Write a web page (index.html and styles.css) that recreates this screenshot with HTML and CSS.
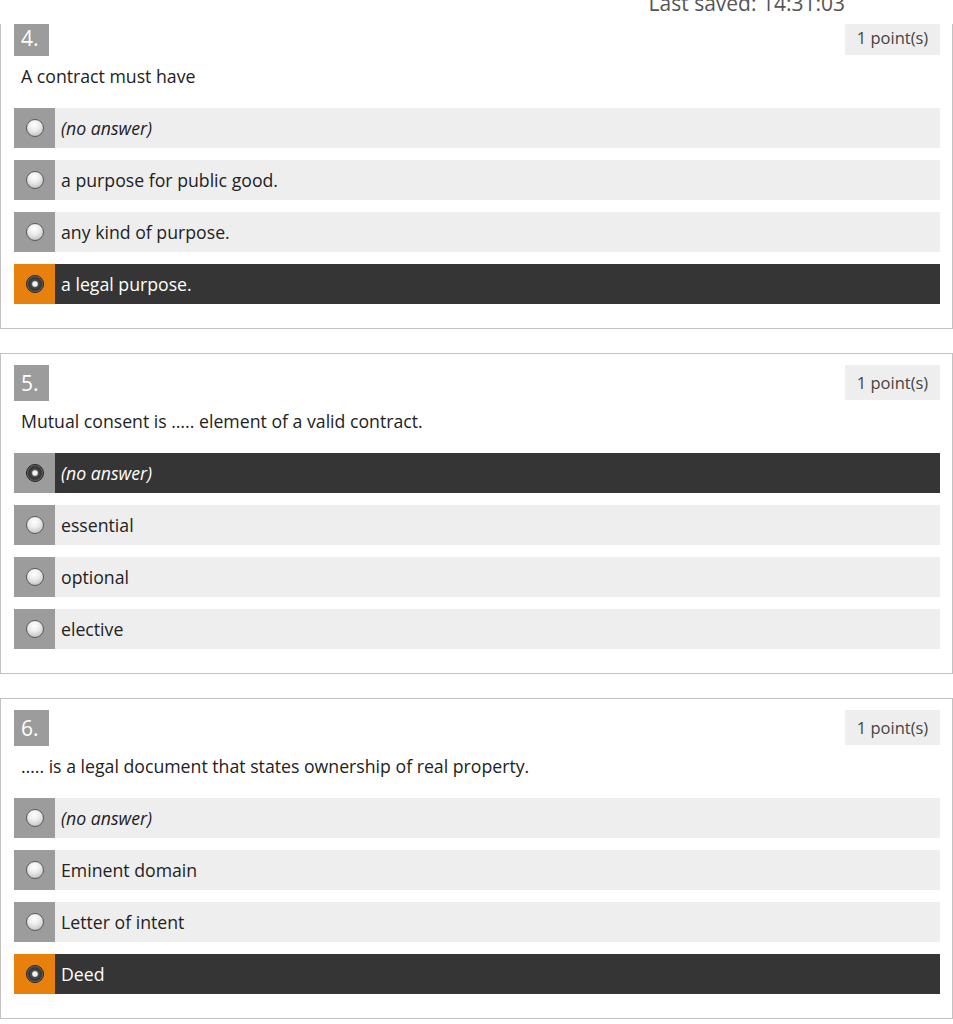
FILE: index.html
```html
<!DOCTYPE html>
<html>
<head>
<meta charset="utf-8">
<link rel="stylesheet" href="styles.css">
</head>
<body>
<div class="topbar"><span class="saved">Last saved: 14:31:03</span></div>
<main class="quiz">
  <section class="card">
    <div class="card-head"><span class="num">4.</span><span class="points">1 point(s)</span></div>
    <p class="question">A contract must have</p>
    <ul class="options">
      <li class="opt"><span class="radio"><i class="dot"></i></span><span class="label"><em>(no answer)</em></span></li>
      <li class="opt"><span class="radio"><i class="dot"></i></span><span class="label">a purpose for public good.</span></li>
      <li class="opt"><span class="radio"><i class="dot"></i></span><span class="label">any kind of purpose.</span></li>
      <li class="opt selected answered"><span class="radio"><i class="dot"></i></span><span class="label">a legal purpose.</span></li>
    </ul>
  </section>
  <section class="card">
    <div class="card-head"><span class="num">5.</span><span class="points">1 point(s)</span></div>
    <p class="question">Mutual consent is ….. element of a valid contract.</p>
    <ul class="options">
      <li class="opt selected"><span class="radio"><i class="dot"></i></span><span class="label"><em>(no answer)</em></span></li>
      <li class="opt"><span class="radio"><i class="dot"></i></span><span class="label">essential</span></li>
      <li class="opt"><span class="radio"><i class="dot"></i></span><span class="label">optional</span></li>
      <li class="opt"><span class="radio"><i class="dot"></i></span><span class="label">elective</span></li>
    </ul>
  </section>
  <section class="card">
    <div class="card-head"><span class="num">6.</span><span class="points">1 point(s)</span></div>
    <p class="question">….. is a legal document that states ownership of real property.</p>
    <ul class="options">
      <li class="opt"><span class="radio"><i class="dot"></i></span><span class="label"><em>(no answer)</em></span></li>
      <li class="opt"><span class="radio"><i class="dot"></i></span><span class="label">Eminent domain</span></li>
      <li class="opt"><span class="radio"><i class="dot"></i></span><span class="label">Letter of intent</span></li>
      <li class="opt selected answered"><span class="radio"><i class="dot"></i></span><span class="label">Deed</span></li>
    </ul>
  </section>
</main>
</body>
</html>
```
FILE: styles.css
```css
html, body {
  margin: 0;
  padding: 0;
  background: #fff;
  font-family: "Open Sans", "Noto Sans", sans-serif;
  color: #222;
}

.topbar {
  position: fixed;
  top: 0;
  left: 0;
  right: 0;
  height: 24px;
  background: #fff;
  overflow: hidden;
  display: flex;
  justify-content: flex-end;
  padding-right: 108px;
  z-index: 2;
}

.saved {
  font-size: 21px;
  line-height: 20px;
  color: #555;
  margin-top: -7px;
  white-space: nowrap;
}

.quiz {
  padding-top: 8px;
  display: flex;
  flex-direction: column;
  gap: 24px;
}

.card {
  border: 1px solid #c2c2c2;
  padding: 11px 12px 24px 13px;
  width: 953px;
  box-sizing: border-box;
}

.card-head {
  display: flex;
  justify-content: space-between;
  align-items: flex-start;
  height: 36px;
}

.num {
  background: #9c9c9c;
  color: #fff;
  font-size: 21px;
  width: 35px;
  height: 36px;
  line-height: 36px;
  box-sizing: border-box;
  padding-left: 7px;
}

.points {
  background: #eeeeee;
  color: #444;
  font-size: 16.5px;
  width: 95px;
  height: 35px;
  line-height: 35px;
  text-align: center;
  box-sizing: border-box;
}

.question {
  margin: 8px 0 0 7px;
  font-size: 17.7px;
  line-height: 24px;
  color: #222;
}

.options {
  list-style: none;
  margin: 20px 0 0 0;
  padding: 0;
  display: flex;
  flex-direction: column;
  gap: 12px;
}

.opt {
  display: flex;
  height: 40px;
  background: #eeeeee;
}

.radio {
  width: 41px;
  flex: none;
  background: #9c9c9c;
  display: flex;
  align-items: center;
  justify-content: center;
}

.dot {
  width: 18px;
  height: 18px;
  border-radius: 50%;
  box-sizing: border-box;
  border: 1px solid #5a5a5a;
  background: radial-gradient(circle at 45% 30%, #ffffff 0%, #ececec 40%, #c4c4c4 80%, #a8a8a8 100%);
}

.label {
  display: flex;
  align-items: center;
  padding-left: 6px;
  font-size: 17.7px;
  color: #222;
}

.label em {
  font-style: italic;
}

.opt.selected {
  background: #353535;
}

.opt.selected .label {
  color: #fff;
}

.opt.answered .radio {
  background: #e8800e;
}

.opt.selected .dot {
  border: 1px solid #1e1e1e;
  background: radial-gradient(circle at 50% 50%, #ffffff 0%, #e8e8e8 20%, #4a4a4a 32%, #333 55%, #8a8a8a 78%, #2a2a2a 100%);
}
```
